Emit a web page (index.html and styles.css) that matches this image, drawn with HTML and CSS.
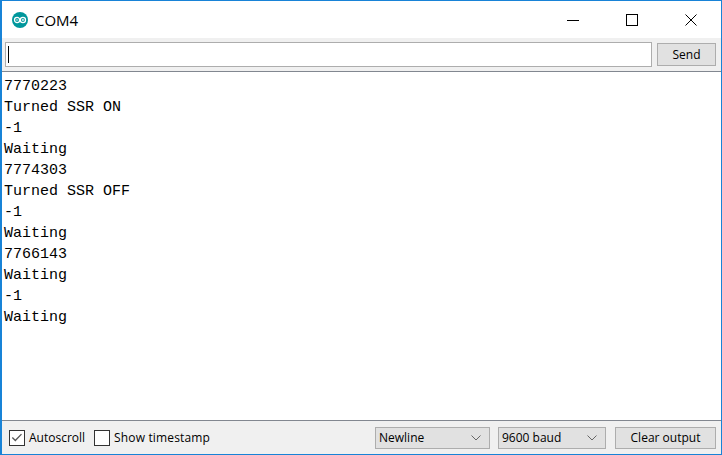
FILE: index.html
```html
<!DOCTYPE html>
<html lang="en">
<head>
<meta charset="utf-8">
<title>COM4</title>
<link rel="stylesheet" href="styles.css">
</head>
<body>
<div class="window">
  <header class="titlebar">
    <svg class="app-icon" width="16" height="16" viewBox="0 0 16 16">
      <circle cx="8" cy="8" r="8" fill="#00979c"/>
      <circle cx="5.1" cy="8" r="2.6" fill="none" stroke="#fff" stroke-width="1.3"/>
      <circle cx="10.9" cy="8" r="2.6" fill="none" stroke="#fff" stroke-width="1.3"/>
      <path d="M4 8h2.2M9.8 8h2.2M10.9 6.9v2.2" stroke="#fff" stroke-width="0.8" fill="none"/>
    </svg>
    <span class="title">COM4</span>
    <div class="controls">
      <span class="ctl"><svg width="12" height="12" viewBox="0 0 12 12"><path d="M0 6.5h12" stroke="#000" fill="none"/></svg></span>
      <span class="ctl"><svg width="12" height="12" viewBox="0 0 12 12"><rect x="0.5" y="0.5" width="11" height="11" stroke="#000" fill="none"/></svg></span>
      <span class="ctl"><svg width="12" height="12" viewBox="0 0 12 12"><path d="M0.5 0.5l11 11M11.5 0.5l-11 11" stroke="#000" fill="none"/></svg></span>
    </div>
  </header>
  <div class="sendbar">
    <div class="input"><span class="caret"></span></div>
    <button class="btn send">Send</button>
  </div>
  <main class="output">
    <div>7770223</div>
    <div>Turned SSR ON</div>
    <div>-1</div>
    <div>Waiting</div>
    <div>7774303</div>
    <div>Turned SSR OFF</div>
    <div>-1</div>
    <div>Waiting</div>
    <div>7766143</div>
    <div>Waiting</div>
    <div>-1</div>
    <div>Waiting</div>
  </main>
  <footer class="statusbar">
    <span class="check"><svg width="15" height="15" viewBox="0 0 15 15"><path d="M2.5 7.5l3.2 3.2 6.6-6.8" stroke="#555" stroke-width="1.4" fill="none"/></svg></span>
    <span class="label">Autoscroll</span>
    <span class="check second"></span>
    <span class="label wide">Show timestamp</span>
    <span class="spacer"></span>
    <div class="combo newline"><span>Newline</span><svg width="10" height="6" viewBox="0 0 10 6"><path d="M0.5 0.5l4.5 4.5 4.5-4.5" stroke="#666" fill="none"/></svg></div>
    <div class="combo baud"><span>9600 baud</span><svg width="10" height="6" viewBox="0 0 10 6"><path d="M0.5 0.5l4.5 4.5 4.5-4.5" stroke="#666" fill="none"/></svg></div>
    <button class="btn clear">Clear output</button>
  </footer>
</div>
</body>
</html>
```
FILE: styles.css
```css
* { box-sizing: border-box; }
html, body { margin: 0; padding: 0; }
body { width: 722px; height: 455px; overflow: hidden; font-family: "Open Sans", "Noto Sans", sans-serif; color: #000; }
.window { width: 722px; height: 455px; display: flex; flex-direction: column; border: 1px solid #1883d7; border-left-width: 2px; background: #f0f0f0; }
.titlebar { height: 37px; flex: none; background: #fff; display: flex; align-items: center; padding: 0 1px 0 10px; }
.app-icon { flex: none; }
.title { margin-left: 7px; font-size: 15px; }
.controls { margin-left: auto; display: flex; }
.ctl { width: 59px; height: 37px; display: flex; align-items: center; justify-content: center; }
.sendbar { height: 33px; flex: none; display: flex; align-items: flex-start; padding: 4px 5px 0 3px; }
.input { width: 647px; height: 25px; background: #fff; border: 1px solid #adadad; display: flex; align-items: center; padding-left: 2px; }
.caret { width: 1px; height: 17px; background: #000; }
.btn { font-family: inherit; font-size: 12px; color: #000; background: #e1e1e1; border: 1px solid #adadad; padding: 0; }
.send { width: 59px; height: 23px; margin: 1px 0 0 5px; }
.output { flex: 1; min-height: 0; background: #fff; border-top: 1px solid #828790; border-bottom: 1px solid #828790; padding: 4px 2px 0; font-family: "Liberation Mono", monospace; font-size: 15px; line-height: 21px; }
.statusbar { height: 33px; flex: none; display: flex; align-items: center; padding: 0 5px 0 7px; font-size: 12px; }
.check { width: 16px; height: 16px; background: #fff; border: 1px solid #333; display: flex; align-items: center; justify-content: center; flex: none; }
.second { margin-left: 9px; }
.label { margin-left: 4px; }
.wide { letter-spacing: 0.15px; }
.spacer { flex: 1; }
.combo { height: 22px; background: #e1e1e1; border: 1px solid #adadad; display: flex; align-items: center; justify-content: space-between; padding: 0 8px 0 3px; flex: none; }
.newline { width: 115px; }
.baud { width: 108px; margin-left: 8px; }
.clear { width: 101px; height: 22px; margin-left: 9px; }
```
